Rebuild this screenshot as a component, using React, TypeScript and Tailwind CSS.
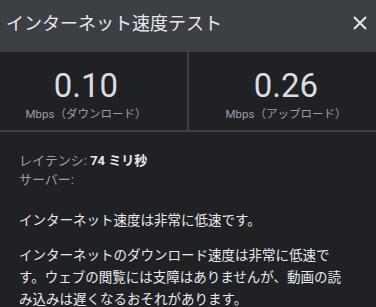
import React from "react";

export default function App() {
  const font = { fontFamily: 'Roboto, "Noto Sans CJK JP", sans-serif' };
  return (
    <div className="w-[376px] h-[307px] bg-[#202124] overflow-hidden" style={font}>
      <div className="h-[52px] bg-[#3c3f43] flex items-center justify-between pl-[6px] pr-[8px]">
        <div className="text-[18px] text-[#e8eaed] leading-none pb-[5px]">インターネット速度テスト</div>
        <svg width="16" height="16" viewBox="0 0 16 16" className="mb-[6px]">
          <path d="M2 2 L14 14 M14 2 L2 14" stroke="#e8eaed" strokeWidth="2" />
        </svg>
      </div>
      <div className="flex h-[80px] border-b-2 border-[#3c4043]">
        <div className="w-[187px] flex flex-col items-center pt-[17px] pr-[15px]">
          <div className="text-[33px] leading-none text-[#dadce0]">0.10</div>
          <div className="text-[11.5px] leading-none mt-[7px] text-[#9aa0a6]">Mbps（ダウンロード）</div>
        </div>
        <div className="w-[2px] bg-[#3c4043]"></div>
        <div className="flex-1 flex flex-col items-center pt-[17px] pl-[7px]">
          <div className="text-[33px] leading-none text-[#dadce0]">0.26</div>
          <div className="text-[11.5px] leading-none mt-[7px] text-[#9aa0a6]">Mbps（アップロード）</div>
        </div>
      </div>
      <div className="pl-[19px] pr-[12px] pt-[19px]">
        <div className="text-[13px] leading-[19px] text-[#9aa0a6]">
          レイテンシ: <span className="font-bold text-[#e8eaed]">74 ミリ秒</span>
        </div>
        <div className="text-[13px] leading-[19px] text-[#9aa0a6]">サーバー:</div>
        <div className="mt-[20px] text-[13.5px] leading-[22px] text-[#e8eaed]">インターネット速度は非常に低速です。</div>
        <div className="mt-[13px] text-[13.5px] leading-[22px] text-[#e8eaed]">
          インターネットのダウンロード速度は非常に低速で
          <br />
          す。ウェブの閲覧には支障はありませんが、動画の読
          <br />
          み込みは遅くなるおそれがあります。
        </div>
      </div>
    </div>
  );
}
